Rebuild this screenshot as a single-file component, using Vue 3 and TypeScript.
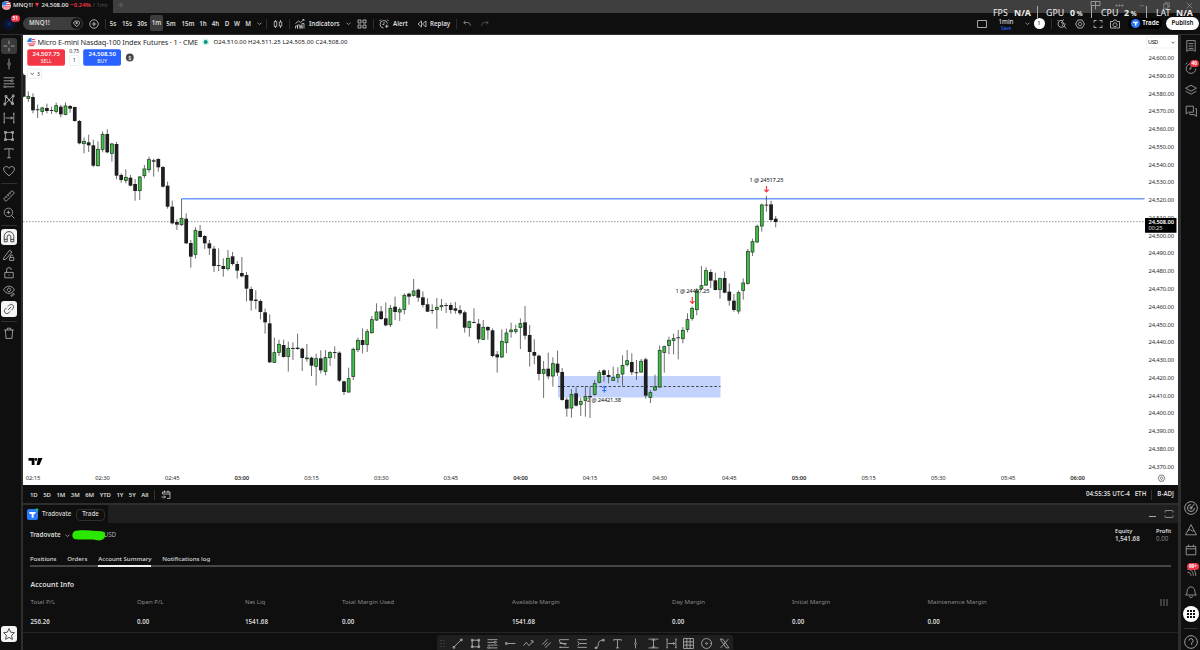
<script setup lang="ts">
const icons: Record<string, string> = {
  cross: 'M10 1v6M10 13v6M1 10h6M13 10h6M10 10h.1',
  vline: 'M10 1v7M10 12v7M10 8a2 2 0 1 0 .1 0z',
  fib: 'M1 3h18M1 8h13M1 13h18M5 18h14M15 6.2a1.8 1.8 0 1 0 .1 0zM3 16.2a1.8 1.8 0 1 0 .1 0z',
  pattern: 'M3 17L5 4l10 12 2-13L3 17M5 4l12 13M3.500 2.500h3v3h-3zM15.500 1.500h3v3h-3zM1.500 15.500h3v3h-3zM14.500 14.500h3v3h-3z',
  range: 'M2 1v18M18 1v18M4 10h12M1 3h2M1 17h2M17 3h2M17 17h2M13 8l3 2-3 2',
  rect: 'M4 4h12v12H4zM2.500 2.500h3v3h-3zM14.500 2.500h3v3h-3zM2.500 14.500h3v3h-3zM14.500 14.500h3v3h-3z',
  text: 'M3 5V3h14v2M10 3v15M7 18h6',
  heart: 'M10 18C4 13 1 10 1 6.500 1 2 7.500 1 10 5.500 12.500 1 19 2 19 6.500 19 10 16 13 10 18z',
  ruler: 'M1 15L15 1l4 4L5 19zM8 8l2 2M11 5l2 2M5 11l2 2',
  zoom: 'M9 2a7 7 0 1 0 .1 0zM14 14l5 5M6 9h6M9 6v6',
  magnet: 'M2 18V9a8 8 0 0 1 16 0v9h-5V9.500a3 3 0 0 0-6 0V18zM2 14h5M13 14h5',
  pencil: 'M1 15L11 2l4 3L5 17l-4 1zM11 14h7v5h-7zM12.500 14v-2a2 2 0 0 1 4 0',
  unlock: 'M3 9h14v9H3zM6 9V5a4 4 0 0 1 8 0M10 12.500v2',
  eye: 'M1 8c4-8 14-8 18 0-4 8-14 8-18 0zM10 5a3 3 0 1 0 .1 0zM13 18l4-4 2 1-4 4z',
  link: 'M8.500 11.500l5-5M8 6l2.500-2.500c4-4 9.500 2 6 6L14 12M6 8l-2.500 2.500c-4 4 2 9.500 6 6L12 14',
  trash: 'M2 5h16M7 5V2h6v3M4 5l1 14h10l1-14',
  star: 'M10 1l2.800 6 6.200.8-4.600 4.400L15.600 19 10 15.600 4.400 19l1.200-6.800L1 7.800 7.200 7z',
  chev: 'M2 7l8 7 8-7',
  plus: 'M10 1.500a8.500 8.500 0 1 0 .1 0zM10 5.500v9M5.500 10h9',
  candles: 'M5 2v3M5 15v3M2.500 5h5v10h-5zM15 2v4M15 14v4M12.500 6h5v8h-5z',
  indicator: 'M1 19v-5h4v5M5 19v-7h5v7M10 19v-5h4v5M14 19V9h4v10M1 9l6-5 4 3 7-6M15 1h3v3',
  grid: 'M2 2h6v6H2zM12 2h6v6h-6zM2 12h6v6H2zM12 12h6v6h-6z',
  alarm: 'M9 18A7.500 7.500 0 1 1 17 9M10 6v5H7M1 4l3-3M16 1l3 3M12 14.500h7M15.500 11v7',
  clock: 'M10 3a8 8 0 1 0 8 8M10 6.500v5H6.500M1 4l3-3M14 4h.1M17 7h.1',
  replay: 'M9 4v12L2 10zM18 4v12l-7-6z',
  undo: 'M6 2L2 6.500l4 4.500M2 6.500h10c5 0 6 3 6 8',
  redo: 'M14 2l4 4.500-4 4.500M18 6.500H8c-5 0-6 3-6 8',
  square: 'M1 3h18v14H1z',
  quick: 'M16 9a7 7 0 1 1-5-6M13.500 14l5 5M13 1l-4 7h5l-4 6M1 2l3 3',
  hex: 'M6 2h8l5 8-5 8H6l-5-8zM10 6.500a3.500 3.500 0 1 0 .1 0z',
  full: 'M2 7V3h5M13 3h5v4M18 13v4h-5M7 17H2v-4',
  camera: 'M1 5h5l2-3h4l2 3h5v13H1zM10 7.500a4 4 0 1 0 .1 0z',
  list: 'M3 1h14v18l-3-2H6l-3 2zM6 6h8M6 10h8M6 14h8',
  layers: 'M10 2l9 5-9 5-9-5zM1 12l9 5 9-5',
  chat: 'M2 2h12v10H6l-4 3zM17 6h2v13l-4-3H8v-2',
  target: 'M10 1a9 9 0 1 0 .1 0zM10 5a5 5 0 1 0 5 5M10 10l5-6M10 8.500a1.500 1.500 0 1 0 .1 0z',
  mountain: 'M10 1L1 18h18zM5 11l4-2 3 3 3-1',
  calendar: 'M2 4h16v14H2zM2 8h16M6 1v4M14 1v4',
  feed: 'M4 18h.1M4 12c4 0 6 3 6 6M4 7c7 0 10 6 10 11M4 2c9 0 14 8 14 16',
  bell: 'M1 15h18c-3-2-2-5-3-9C14 0 6 0 4 6c-1 4 0 7-3 9zM7 17c1 3 5 3 6 0',
  help: 'M10 1a9 9 0 1 0 .1 0zM7 8a3 3 0 1 1 4 3v3',
  line: 'M3 17L17 3M2 15.500h3v3H2zM15.500 2h3v3h-3z',
  ray: 'M4 10h15M1 8.500h3v3H1z',
  path: 'M1 14l5-6 5 6 7-8M14 5h4v4',
  channel: 'M2 12L12 2M8 18L18 8M6 14l6-6',
  pos: 'M1 3h17M1 10h13M1 17h17M1 3v4l12 6M17 8.500h.1M2 15.500v3',
  pos2: 'M1 3h17M4 10h14M1 17h17M1 6l3 4-3 4',
  curve: 'M3 18c5 0 4-4 5-8 1-5 4-6 9-6M2 16.500h3v3H2zM15.500 2.500h3v3h-3z',
  price: 'M1 2h18M1 18h18M10 2v16M7 5l3-3 3 3M7 15l3 3 3-3',
  table: 'M1 1h18v18H1zM1 7h18M1 13h18M7 1v18M13 1v18',
  dot: 'M10 1a9 9 0 1 0 .1 0zM10 8.500a1.500 1.500 0 1 0 .1 0zM17 10h3',
  cross2: 'M2 2l11 16h5L7 2zM17 2L3 18',
  goto: 'M3 8V4h15v13h-6M3 8h15M7 1v4M14 1v4M1 14h8M6 11l3 3-3 3',
  layout: 'M1 3h18v8H1zM10 3v8M10 11v8',
  more: 'M2 10a1.500 1.500 0 1 0 3 0 1.500 1.500 0 1 0-3 0zM8.500 10a1.500 1.500 0 1 0 3 0 1.500 1.500 0 1 0-3 0zM15 10a1.500 1.500 0 1 0 3 0 1.500 1.500 0 1 0-3 0z',
  min: 'M2 11h16',
  restore: 'M2 6h12v12H2zM6 6V2h12v12h-4',
  close: 'M2 2l16 16M18 2L2 18',
}

type Cell = { t: string; v?: string; c?: string }
const g: Cell = { t: 'gap' }
const s: Cell = { t: 'sep' }
const i = (v: string, c = ''): Cell => ({ t: 'icon', v, c })
const x = (v: string, c = ''): Cell => ({ t: 'text', v, c })
const topbar: Cell[] = [
  { t: 'avatar' }, g, { t: 'symbol' }, g, i('plus'), s,
  x('5s'), x('15s'), x('30s'), x('1m', 'on'), x('5m'), x('15m'), x('1h'), x('4h'), x('D'), x('W'), x('M'), i('chev', 'sm'), s,
  i('candles'), s, i('indicator'), x('Indicators', 'start'), i('chev', 'sm'), i('grid'), s,
  i('alarm'), g, x('Alert', 'start'), i('replay'), g, x('Replay', 'start'), s, i('undo', 'dim'), i('redo', 'dimmer'), g,
  i('square'), { t: 'layout' }, i('chev', 'sm'), { t: 'one' }, s, i('quick'), i('hex'), i('full'), i('camera'),
  { t: 'trade' }, g, { t: 'publish' },
]

const tools = ['cross', 'vline', 'fib', 'pattern', 'range', 'rect', 'text', 'heart', '', 'ruler', 'zoom', '', 'magnet', 'pencil', 'unlock', 'eye', 'link', '', 'trash']
const drawing = ['line', 'rect', 'fib', 'ray', 'path', 'channel', 'pos', 'pos2', 'curve', 'text', 'vline', 'price', 'range', 'table', 'dot', 'cross2']

// Bars: offset, then "high top bottom low" in thirds of a pixel; + rising, - falling
const series: [number, string][] = [
  [30, '-130 135 200 202,+184 198 206 216,-190 201 241 250,-224 238 240 264,+230 233 245 256,-221 234 243 250,-230 240 242 252,+218 226 245 250,-225 230 253 262,+217 227 254 256,-225 228 236 248,-230 231 273 275,-270 273 340 343,+322 333 342 370,-314 337 346 366,-329 346 407 411,+334 357 408 410,+304 312 359 367,-298 312 367 370,+339 341 371 395,-336 342 437 448,-430 435 450 458,+418 441 452 460,-435 443 467 469,-447 462 483 512,+438 440 483 510,+405 416 438 445,+380 388 420 428,-386 391 395 440,-385 387 412 425,-408 411 470 473,-455 467 530 536,-512 530 580 583,-568 576 584 600,+507 564 585 588,-550 566 640 642,-630 639 680 713'],
  [180, '+142 150 224 236,-135 153 171 173,-165 168 190 207,-180 190 205 225,-198 206 258 276,-205 255 257 273,-235 258 267 290,+210 234 267 272,-216 229 252 257,-243 252 272 296,-231 279 289 292,-276 285 326 364,-320 327 362 392,-331 359 363 388,-358 363 396 418,-386 397 427 461,-403 430 547 549,+473 517 548 549,+479 492 518 528,-479 495 531 533,+485 504 530 575,-487 504 506 540,-461 503 507 509,-503 506 534 573,+492 533 537 545,-530 533 557 588,+521 535 560 617,-511 535 571 580,+510 532 575 586,+513 517 534 558,-499 516 518 536,-514 518 602 606,-602 604 636 645,+563 595 637 638,+503 507 590 600,+473 480 510 516,-445 480 495 520,+447 454 494 516,+408 418 459 461,+370 395 421 423,-378 394 417 420,-367 415 436 439,+375 384 435 441'],
  [270, '-80 110 126 150,+112 118 127 153,+70 75 119 133,-68 71 80 104,+27 62 77 80,-56 59 83 95,-64 82 105 112,-85 103 125 126,-103 120 122 131,+84 111 119 176,+87 106 111 122,-98 105 107 129,-98 105 120 131,-96 115 122 131,-106 120 130 135,-122 127 173 188,+152 154 174 200,-115 156 158 160,-147 161 208 220,+150 171 209 210,-168 171 181 209,-176 181 258 262,-243 253 262 308,+178 213 262 264,+176 188 219 249,+158 179 186 203,+164 178 185 191,+145 160 173 237,-108 157 197 208,-165 195 246 290,-208 246 257 283,-254 257 312 331,+273 297 311 384,-248 296 319 328,+262 280 319 350,-242 281 308 318'],
  [250, '-354 366 450 452,-443 449 476 500,+417 433 475 503,-412 430 467 470,+443 453 464 498,+408 439 452 500,-410 438 442 504,+390 400 434 437,+360 367 398 400,-358 361 375 395,-360 375 381 400,+350 382 392 392,+352 373 383 398,+316 345 373 407,+300 331 345 350,-310 336 367 375,-330 367 369 390,+327 333 367 369,-323 328 437 446,+420 427 443 459,+374 410 421 423,+287 300 412 414,+287 289 308 368,+260 270 287 313,+251 265 272 313,-240 262 264 328,+231 240 267 280,+190 208 239 247,+169 174 206 212'],
  [160, '+385 392 450 466,+318 376 386 390,+322 331 376 378,-328 336 362 384,-338 361 390 391,+353 355 389 416,-334 354 398 400,-370 395 422 437,-402 422 450 455,+392 397 454 462,+355 368 392 419,+267 273 371 374,+236 244 277 288,+194 198 247 249,+131 134 199 215,-107 134 136 155,-122 133 180 185,-168 176 186 202'],
]
const candles = series
  .flatMap(([base, rows]) =>
    rows.split(',').map((r) => {
      const [h, t, b, l] = r.slice(1).split(' ').map((n) => base + Number(n) / 3)
      return { up: r[0] === '+', h, t, b, l }
    }),
  )
  .map((c, n) => ({ ...c, x: 23.7 + n * 4.642 }))

const prices = Array.from({ length: 24 }, (_, n) => ({
  label: (24600 - n * 10).toLocaleString('en-US') + '.00',
  y: 58 + n * 17.76,
}))
const times = Array.from({ length: 16 }, (_, n) => {
  const m = 135 + n * 15
  return { label: `0${Math.floor(m / 60)}:${String(m % 60).padStart(2, '0')}`, x: 33 + n * 69.64, hour: m % 60 === 0 }
})
const ranges = ['1D', '5D', '1M', '3M', '6M', 'YTD', '1Y', '5Y', 'All']
const account = [
  ['Total P/L', '256.26'], ['Open P/L', '0.00'], ['Net Liq', '1541.68'], ['Total Margin Used', '0.00'],
  ['Available Margin', '1541.68'], ['Day Margin', '0.00'], ['Initial Margin', '0.00'], ['Maintenance Margin', '0.00'],
]
</script>

<template>
  <div class="app">
    <header class="tabs">
      <div class="tab">
        <svg class="flag" viewBox="0 0 10 10"><circle cx="5" cy="5" r="5" fill="#f4f4f4" /><path d="M5 1.500h3.500M5 4h5M1 6.500h8.800M2 8.800h6" stroke="#e8435a" stroke-width="1.200" /><path d="M5 0A5 5 0 0 0 0 5h5z" fill="#2f7fe0" /></svg>
        <b>MNQ1!</b><i class="tri"></i><b>24,508.00</b><b class="red">−0.24%</b><span class="fade">/ 1mi</span>
      </div>
      <svg class="ic add" viewBox="0 0 20 20"><path d="M10 1v18M1 10h18" /></svg>
      <div class="win">
        <svg v-for="n in ['layout', 'more', 'min', 'restore', 'close']" :key="n" class="ic" :class="n" viewBox="0 0 20 20"><path :d="icons[n]" /></svg>
      </div>
    </header>

    <nav class="topbar">
      <div v-for="(c, n) in topbar" :key="n" class="cell" :class="[c.t, c.c]">
        <svg v-if="c.t === 'icon'" class="ic" viewBox="0 0 20 20"><path :d="icons[c.v!]" /></svg>
        <template v-else-if="c.t === 'text'">{{ c.v }}</template>
        <template v-else-if="c.t === 'avatar'"><span class="face"></span><span class="badge">51</span></template>
        <template v-else-if="c.t === 'symbol'"><b>MNQ1!</b><span class="gem"><svg class="ic" viewBox="0 0 20 20"><path d="M5 3h10l4 5-9 10L1 8zM6 8h8M10 5v6" /></svg></span></template>
        <template v-else-if="c.t === 'layout'"><span>1min</span><span class="save">Save</span></template>
        <span v-else-if="c.t === 'one'">1</span>
        <template v-else-if="c.t === 'trade'"><svg class="tlogo" viewBox="0 0 20 20"><circle cx="10" cy="10" r="10" fill="#2979ff" /><path d="M4 6h12l-2 3.500h-2V15H9V9.500H6z" fill="#fff" /></svg>Trade</template>
        <template v-else-if="c.t === 'publish'">Publish</template>
      </div>
    </nav>

    <div class="stats">
      <span>FPS</span><b>N/A</b><i></i><span>GPU</span><b>0<small> %</small></b><i></i><span>CPU</span><b>2<small> %</small></b><i></i><span>LAT</span><b>N/A</b>
    </div>

    <div class="body">
      <aside class="left">
        <div v-for="(t, n) in tools" :key="n" :class="t ? ['tool', t] : 'rule'">
          <svg v-if="t" class="ic" viewBox="0 0 20 20"><path :d="icons[t]" /></svg>
        </div>
        <div class="tool fav"><svg class="ic" viewBox="0 0 20 20"><path :d="icons.star" /></svg></div>
      </aside>

      <main class="center">
        <svg class="chart" viewBox="23 35 1155 450">
          <rect x="558" y="376" width="162.500" height="21.500" fill="#c3d3fd" />
          <line x1="558" x2="720.500" y1="386.500" y2="386.500" stroke="#333" stroke-width=".9" stroke-dasharray="2.600 2" />
          <line x1="23" x2="1144" y1="221.700" y2="221.700" stroke="#909090" stroke-width=".9" stroke-dasharray="1.600 1.400" />
          <line x1="181.500" x2="1144.500" y1="198.800" y2="198.800" stroke="#6f98fb" stroke-width="1.600" />
          <g v-for="c in candles" :key="c.x">
            <line :x1="c.x" :x2="c.x" :y1="c.h" :y2="c.l" stroke="#4a4a4a" stroke-width=".8" />
            <rect v-if="c.up" :x="c.x - 1.45" :y="c.t + .3" width="2.900" :height="Math.max(.8, c.b - c.t - .6)" fill="#45bd4b" stroke="#1d3f1f" stroke-width=".75" />
            <rect v-else :x="c.x - 1.85" :y="c.t" width="3.700" :height="Math.max(.9, c.b - c.t)" fill="#1e1e1e" />
          </g>
          <g class="mark">
            <text x="749.500" y="181.500" textLength="34">1 @ 24517.25</text>
            <text x="675.500" y="292.500" textLength="34">1 @ 24497.25</text>
            <text x="587" y="402" textLength="34">2 @ 24421.38</text>
          </g>
          <path d="M766.500 186v6M764.300 189.700l2.200 2.300 2.200-2.300M692.300 297v6.500M690.100 301.200l2.200 2.300 2.200-2.300" class="sellarrow" />
          <path d="M604.300 392.500v-6.500M602.100 388.200l2.200-2.300 2.200 2.300M602.300 390.500h4" class="buyarrow" />

          <g class="axis">
            <text v-for="p in prices" :key="p.y" x="1148.500" :y="p.y + 2.1" textLength="25.500">{{ p.label }}</text>
            <text v-for="t in times" :key="t.x" :x="t.x - 7.3" y="480.200" textLength="14.600" :class="{ hour: t.hour }">{{ t.label }}</text>
          </g>
          <rect x="1145" y="218" width="31.500" height="14.700" rx=".5" fill="#000" />
          <text class="now" x="1148.500" y="223.800" textLength="25.500">24,508.00</text>
          <text class="count" x="1148.500" y="230.300" textLength="14">00:25</text>
          <rect x="1146.500" y="37" width="29.500" height="11" rx="1.500" fill="#fff" stroke="#eaeaea" stroke-width=".6" />
          <text class="usd" x="1148" y="44.300" textLength="10.300">USD</text>
          <path d="M1171.600 42l1.400 1.300 1.400-1.300" fill="none" stroke="#333" stroke-width=".8" />
          <path d="M1159.800 475.200h3.400l1.700 3-1.700 3h-3.400l-1.700-3zM1161.500 477a1.200 1.200 0 1 0 .1 0z" fill="none" stroke="#444" stroke-width=".7" />

          <circle cx="31.500" cy="42" r="4.200" fill="#eceef4" />
          <path d="M31.500 39.500h3.400M31.500 41.800h4.200M27.700 44h7.600M29 45.700h5" stroke="#e8435a" stroke-width="1" />
          <path d="M31.500 37.800a4.200 4.200 0 0 0-4.200 4.200h4.200z" fill="#2f7fe0" />
          <text class="title" x="37.500" y="44.900" textLength="160.500">Micro E-mini Nasdaq-100 Index Futures · 1 · CME</text>
          <circle cx="205.700" cy="42" r="3.500" fill="#d5f0ea" /><circle cx="205.700" cy="42" r="2" fill="#089981" />
          <text class="ohlc" x="213.500" y="44.200" textLength="134">O24,510.00 H24,511.25 L24,505.00 C24,508.00</text>

          <rect x="27.300" y="49.300" width="37.700" height="16.400" rx="2" fill="#f23645" />
          <rect x="83.200" y="49.300" width="37.800" height="16.400" rx="2" fill="#2962ff" />
          <g class="deal">
            <text x="46.200" y="56.200"><tspan class="big">24,507.75</tspan></text><text x="46.200" y="63">SELL</text>
            <text x="102.200" y="56.200"><tspan class="big">24,508.50</tspan></text><text x="102.200" y="63">BUY</text>
          </g>
          <text class="spread" x="74.200" y="53.400">0.75</text>
          <rect x="69.500" y="55.500" width="9.500" height="10" rx="1.500" fill="#fff" stroke="#e4e4e4" stroke-width=".6" />
          <text class="spread" x="74.200" y="62.400">1</text>
          <circle cx="129.800" cy="57.500" r="3.900" fill="#454545" />
          <text class="coin" x="129.800" y="59.600">$</text>
          <rect x="27.500" y="69" width="14.200" height="9.300" rx="1" fill="#fff" stroke="#dedede" stroke-width=".6" />
          <path d="M30.500 73l1.700 1.600 1.700-1.600" fill="none" stroke="#333" stroke-width=".8" />
          <text class="spread" x="38.500" y="75.700">3</text>
          <path d="M28.500 458h6v7h-2.800v-4.200h-3.200zM38.200 458h4.300l-3 7h-3z" /><circle cx="36" cy="459.400" r="1.300" />
        </svg>

        <div class="ranges">
          <span v-for="r in ranges" :key="r">{{ r }}</span><i></i>
          <svg class="ic" viewBox="0 0 20 20"><path :d="icons.goto" /></svg>
          <div class="clock"><span>04:55:35 UTC-4</span><span>ETH</span><i></i><span>B-ADJ</span></div>
        </div>

        <section class="panel">
          <div class="phead">
            <div class="ptab">
              <svg class="broker" viewBox="0 0 20 20"><rect width="20" height="20" rx="3.500" fill="#2979ff" /><path d="M3.500 5.500h13l-2 3.500H12v7H8.500V9H5.500z" fill="#fff" /><circle cx="18" cy="1.500" r="2.800" fill="#12b886" /></svg>
              <span>Tradovate</span><button>Trade</button>
            </div>
            <div class="pwin"><i></i><svg class="ic" viewBox="0 0 20 20"><path d="M2 7V5q0-2 2-2h12q2 0 2 2v2M18 13v2q0 2-2 2H4q-2 0-2-2v-2" /></svg></div>
          </div>
          <div class="who">
            <b>Tradovate</b>
            <svg class="ic" viewBox="0 0 20 20"><path :d="icons.chev" /></svg>
            <svg class="redact" viewBox="0 0 34 11"><path d="M4 .8C10 0 17 .2 24 .9l6 .3c4 .4 4.500 7 0 8.500-3 1.600-6 0-9-.2C14 9.200 8 10 4 9.300-.8 9 -1 1.500 4 .8z" fill="#2be800" /></svg>
            <span>USD</span>
            <dl><div><dt>Equity</dt><dd>1,541.68</dd></div><div><dt>Profit</dt><dd class="mute">0.00</dd></div></dl>
          </div>
          <div class="ptabs"><span>Positions</span><span>Orders</span><span class="sel">Account Summary</span><span>Notifications log</span></div>
          <h3>Account Info</h3>
          <div class="acct">
            <div v-for="[k, v] in account" :key="k"><span>{{ k }}</span><b>{{ v }}</b></div>
            <svg class="bars" viewBox="0 0 8 7"><path d="M1 0v7M4 0v7M7 0v7" stroke="#888" stroke-width=".8" /></svg>
          </div>
          <div class="draw">
            <svg class="grip" viewBox="0 0 5 7"><path d="M1 0v7M4 0v7" stroke="#555" stroke-dasharray="1 2" /></svg>
            <svg v-for="d in drawing" :key="d" class="ic" viewBox="0 0 20 20"><path :d="icons[d]" /></svg>
          </div>
        </section>
      </main>

      <aside class="right">
        <svg class="ic" viewBox="0 0 20 20"><path :d="icons.list" /></svg>
        <div class="wrap"><svg class="ic" viewBox="0 0 20 20"><path :d="icons.clock" /></svg><span class="badge">40</span></div>
        <svg class="ic" viewBox="0 0 20 20"><path :d="icons.layers" /></svg>
        <svg class="ic" viewBox="0 0 20 20"><path :d="icons.chat" /></svg>
        <div class="low">
          <svg class="ic big" viewBox="0 0 20 20"><path :d="icons.target" /></svg>
          <svg class="ic" viewBox="0 0 20 20"><path :d="icons.mountain" /></svg>
          <svg class="ic" viewBox="0 0 20 20"><path :d="icons.calendar" /></svg>
          <div class="wrap"><svg class="ic" viewBox="0 0 20 20"><path :d="icons.feed" /></svg><span class="badge wide">99+</span></div>
          <svg class="ic" viewBox="0 0 20 20"><path :d="icons.bell" /></svg>
          <svg class="apps" viewBox="0 0 16 16"><circle cx="8" cy="8" r="8" fill="#fff" /><path d="M4 4h2v2H4zM7 4h2v2H7zM10 4h2v2h-2zM4 7h2v2H4zM7 7h2v2H7zM10 7h2v2h-2zM4 10h2v2H4zM7 10h2v2H7zM10 10h2v2h-2z" fill="#111" /></svg>
          <i></i>
          <svg class="ic big" viewBox="0 0 20 20"><path :d="icons.help" /></svg>
        </div>
      </aside>
    </div>
  </div>
</template>

<style>
html, body { margin: 0; background: #0f0f0f; overflow: hidden; }
</style>

<style scoped>
.app { position: relative; width: 1200px; height: 650px; display: flex; flex-direction: column; overflow: hidden; background: #2e2e2e; color: #dbdbdb; font-family: "Noto Sans", "Open Sans", sans-serif; font-size: 6.2px; line-height: 1; white-space: nowrap; }
.app * { box-sizing: border-box; }
.ic { width: 10px; height: 10px; flex: none; fill: none; stroke: currentColor; stroke-width: 1.5; }

.tabs { height: 13px; flex: none; display: flex; align-items: center; background: #3f3f3f; }
.tab { width: 113px; height: 13px; padding: 0 0 3px 2px; display: flex; align-items: center; background: #0f0f0f; font-size: 6.1px; }
.tab b { font-weight: 600; letter-spacing: -.1px; }
.flag { width: 9px; height: 9px; margin-right: 2px; }
.tri { width: 0; height: 0; margin: 0 2.5px 0 2px; border: 2.2px solid transparent; border-top: 4px solid #f23645; border-bottom: 0; }
.tab .red { color: #f23645; margin: 0 2px; }
.fade { color: #555; }
.add { width: 6px; height: 6px; margin: 0 0 3px 5px; color: #888; }
.win { margin-left: auto; width: 110px; display: grid; grid-template-columns: 10px 38px 8px 40px 6px; align-items: center; justify-items: center; color: #a0a0a0; padding-bottom: 3px; }
.win .ic { width: 7px; height: 7px; stroke-width: 1.8; }
.win .layout { width: 11px; height: 10px; }
.win .more { width: 9px; height: 9px; }
.win .min { width: 6px; }

.topbar { height: 21px; flex: none; display: grid; grid-template-columns: 20px 3px 60px 1px 20px 2px 14px 14px 16px 13px 16px 18px 12px 13px 10px 10px 12px 11px 3px 20px 3px 18px 30px 18px 10px 12px 10px 4px 22px 14px 1px 22px 8px 14px 22px 1fr 19px 30px 12px 12px 12px 10px 26px 10px 24px 36px 3px 34px; background: #0f0f0f; }
.cell { display: flex; align-items: center; justify-content: center; font-weight: 500; position: relative; min-width: 0; }
.cell.text { padding-top: 1px; font-weight: 600; }
.cell.start { justify-content: flex-start; }
.cell.sm .ic { width: 5px; height: 5px; stroke-width: 2.4; }
.dim { color: #999; }
.dimmer { color: #5e5e5e; }
.dim .ic, .dimmer .ic { width: 8px; height: 8px; stroke-width: 2; }
.sep::before { content: ""; width: 1px; height: 10px; background: #2e2e2e; }
.cell.on { height: 16px; margin-top: 2px; border-radius: 2px; background: #3d3d3d; }
.face { width: 12px; height: 12px; border-radius: 50%; background: radial-gradient(#12307a 0, #0a1330 35%); margin: 1px 2px 0 0; }
.badge { position: absolute; left: 11px; top: 2px; width: 8.5px; height: 7px; border-radius: 4px; background: #f23645; color: #fff; font-size: 4.8px; font-weight: 700; line-height: 7px; text-align: center; }
.symbol { height: 13px; margin-top: 4px; padding: 0 1px 0 6px; border-radius: 7px; background: #3d3d3d; justify-content: space-between; }
.symbol b { font-weight: 600; }
.gem { width: 11px; height: 11px; border-radius: 50%; background: #141414; display: grid; place-items: center; }
.gem .ic { width: 7.5px; height: 7.5px; stroke-width: 2; }
.layout.cell { flex-direction: column; padding-top: 3px; }
.cell .save { color: #2962ff; font-size: 4.6px; margin-top: .5px; }
.one span { width: 11px; height: 11px; border-radius: 50%; background: #fff; color: #111; font-size: 5px; line-height: 11px; text-align: center; }
.trade { height: 13px; margin-top: 4px; border-radius: 7px; background: #000; color: #fff; gap: 2.500px; font-weight: 600; box-shadow: inset 0 0 0 .5px #222; }
.tlogo { width: 9px; height: 9px; }
.publish { height: 13px; margin: 4px 1px 0 0; border-radius: 7px; background: #fff; color: #111; font-weight: 600; }

.stats { position: absolute; z-index: 5; left: 993px; top: 6px; width: 207px; height: 13px; display: grid; grid-template-columns: 21px 23px 9px 24px 21px 10px 23px 22px 10px 20px 24px; align-items: center; color: #eee; font-size: 8.8px; }
.stats i { width: 1px; height: 12px; background: #aaa; align-self: start; }
.stats span, .stats b { padding-top: 2px; }
.stats small { font-size: 6.500px; }

.body { flex: 1; min-height: 0; display: grid; grid-template-columns: 21px 1155px 1fr; column-gap: 2px; }
.left { background: #0f0f0f; margin-top: 1px; padding: 2.500px 0 0 1px; display: flex; flex-direction: column; color: #bdbdbd; }
.tool { width: 16px; height: 17.900px; display: grid; place-items: center; border-radius: 3px; }
.tool .ic { width: 12px; height: 12px; stroke-width: 1.3; }
.tool.cross { background: #3a3a3a; height: 16px; margin-bottom: 1.500px; }
.tool.magnet, .tool.link, .fav { background: #f4f4f4; color: #222; height: 16px; margin: 1px 0; }
.tool.magnet { margin-top: .4px; }
.rule { height: 1px; width: 16px; margin: 2.700px 0; background: #303030; }
.left .fav { margin: auto 0 8px; }

.center { display: flex; flex-direction: column; min-width: 0; padding-top: 1px; }
.chart { width: 1155px; height: 450px; flex: none; background: #fff; }
.axis text { font-size: 5.900px; fill: #2c2c2c; }
.axis .hour { font-weight: 600; }
.now { fill: #fff; font-size: 5.800px; font-weight: 600; }
.count { fill: #ddd; font-size: 5.700px; }
.usd { font-size: 5.400px; }
.title { font-size: 7.300px; fill: #2a2a2a; }
.ohlc { font-size: 6px; fill: #111; }
.mark text { font-size: 5.800px; fill: #111; }
.sellarrow { fill: none; stroke: #f23645; stroke-width: 1.200; }
.buyarrow { fill: none; stroke: #2962ff; stroke-width: 1; }
.deal text { fill: #fff; text-anchor: middle; font-size: 5px; }
.deal .big { font-size: 6px; font-weight: 600; }
.spread { font-size: 5px; text-anchor: middle; fill: #333; }
.coin { font-size: 5.500px; text-anchor: middle; fill: #fff; }

.ranges { height: 18px; flex: none; display: flex; align-items: center; padding: 1px 0 0 7px; background: #0f0f0f; font-weight: 600; }
.ranges > span { font-size: 6px; margin-right: 5.600px; letter-spacing: -.1px; }
.ranges > i, .clock i { width: 1px; height: 10px; background: #333; margin-right: 6px; }
.clock { margin-left: auto; display: flex; align-items: center; gap: 5px; padding-right: 4px; font-size: 6.200px; }
.clock i { margin: 0; }
.panel { position: relative; flex: 1; margin-top: 2px; background: #0f0f0f; }
.phead { height: 18px; background: #1f1f1f; display: flex; justify-content: space-between; }
.ptab { width: 85px; height: 18px; background: #0f0f0f; padding: 1px 0 0 4px; display: flex; align-items: center; font-weight: 500; }
.broker { width: 11px; height: 11px; margin-right: 4px; overflow: visible; }
.ptab button { font: inherit; color: inherit; background: none; border: 1px solid #2e2e2e; border-radius: 4px; width: 29px; height: 12px; padding: 0; margin-left: auto; margin-right: 3px; }
.pwin { display: flex; align-items: center; gap: 8px; padding-right: 4px; color: #aaa; }
.pwin i { width: 7px; height: 1px; background: #aaa; margin-top: 5px; }
.who { height: 24px; padding: 1px 7px 0; display: flex; align-items: center; }
.who b { font-weight: 600; font-size: 6.300px; }
.who > .ic { width: 5px; height: 5px; stroke-width: 2.400; margin: 0 2px 0 4px; }
.redact { width: 34px; height: 11px; margin-right: -2px; z-index: 1; }
.who > span { color: #aaa; }
dl { margin: 0 0 0 auto; display: grid; grid-template-columns: 41px 15px; font-size: 5.700px; font-weight: 600; }
dt { margin-bottom: 2px; } dd { margin: 0; font-size: 6.200px; } .mute { color: #888; font-weight: 400; }
.ptabs { margin: 0 7px; height: 20px; display: flex; gap: 10.800px; align-items: stretch; border-bottom: 2px solid #464646; padding-top: 4px; font-size: 6.100px; font-weight: 500; }
.ptabs span { padding-top: 5px; height: 16px; }
.sel { border-bottom: 2px solid #eee; }
h3 { margin: 13.500px 0 0 7.500px; font-size: 7px; font-weight: 600; }
.acct { margin: 11.500px 7.500px 0; padding-bottom: 8px; display: grid; grid-template-columns: 106.500px 108px 97px 170px 160px 120px 135.500px 1fr 10px; position: relative; }
.acct::after { content: ""; position: absolute; left: -7.500px; right: -7.500px; bottom: 0; height: 1px; background: #242424; }
.acct div { display: flex; flex-direction: column; gap: 13.500px; }
.acct span { color: #8a8a8a; font-size: 6.100px; }
.acct b { font-weight: 600; }
.bars { width: 8px; height: 7px; margin-left: -1px; }
.draw { position: absolute; left: 414px; bottom: 0; width: 296px; height: 15px; padding: 2px 3px 0 3px; display: flex; align-items: center; justify-content: space-between; background: #1f1f1f; border-radius: 3px 3px 0 0; color: #b5b5b5; }
.draw .ic { width: 11px; height: 11px; }
.grip { width: 5px; height: 7px; }

.right { background: #0f0f0f; margin: 1px 0 0 1px; padding: 5px 0 0 4px; display: flex; flex-direction: column; align-items: flex-start; gap: 9.800px; color: #a5a5a5; overflow: hidden; }
.right .ic { width: 12px; height: 12px; display: block; stroke-width: 1.400; }
.wrap { position: relative; }
.wrap .badge { left: 5px; top: -2px; }
.right .ic.big { width: 14px; height: 14px; margin-left: -1px; }
.wrap .wide { left: 2px; width: 12px; }
.low { margin-top: auto; display: flex; flex-direction: column; gap: 8.500px; height: 149px; flex: none; }
.low > i { width: 14px; height: 1px; flex: none; background: #333; margin: -3px 0 -2px -1px; }
.low .wrap { margin-top: .5px; }
.apps { width: 16px; height: 16px; flex: none; margin-left: -2px; }
</style>
